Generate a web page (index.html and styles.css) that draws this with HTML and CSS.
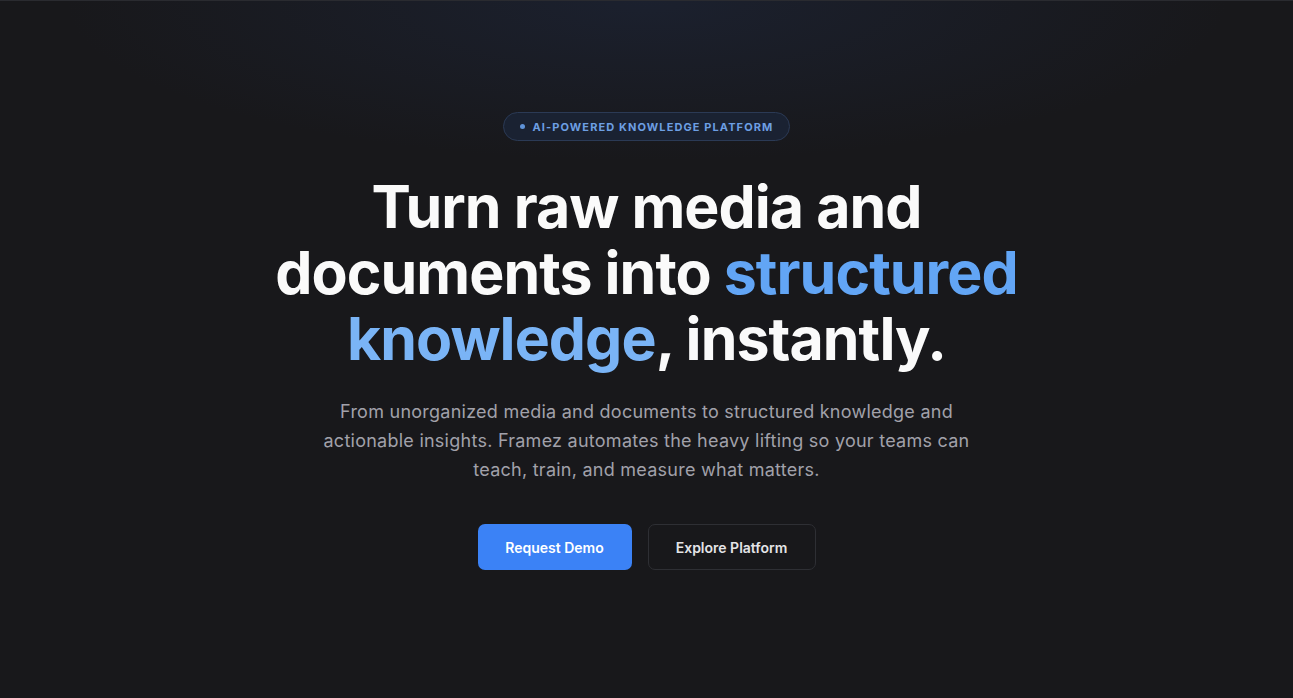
FILE: index.html
```html
<!DOCTYPE html>
<html lang="en">
<head>
<meta charset="utf-8">
<title>Framez</title>
<link rel="stylesheet" href="styles.css">
</head>
<body>
<main class="hero">
  <div class="glow"></div>
  <div class="content">
    <div class="badge"><span class="dot"></span>AI-POWERED KNOWLEDGE PLATFORM</div>
    <h1 class="title">Turn raw media and<br>documents into <span class="accent a1">structured</span><br><span class="accent a2">knowledge</span>, instantly.</h1>
    <p class="lead">From unorganized media and documents to structured knowledge and<br>actionable insights. Framez automates the heavy lifting so your teams can<br>teach, train, and measure what matters.</p>
    <div class="actions">
      <a class="btn btn-primary" href="#">Request Demo</a>
      <a class="btn btn-ghost" href="#">Explore Platform</a>
    </div>
  </div>
</main>
</body>
</html>
```
FILE: styles.css
```css
* { box-sizing: border-box; }
html, body { margin: 0; height: 100%; }
body {
  background: #18181b;
  font-family: Inter, "Noto Sans", sans-serif;
  color: #fff;
}
.hero {
  position: relative;
  height: 698px;
  overflow: hidden;
  border-top: 1px solid #2a2b30;
}
.glow {
  position: absolute;
  left: 0; right: 0; top: 0;
  height: 160px;
  background: radial-gradient(ellipse 45% 100% at 50% 0%, rgba(32, 45, 75, 0.4), rgba(24, 24, 27, 0) 100%);
  pointer-events: none;
}
.content {
  position: relative;
  display: flex;
  flex-direction: column;
  align-items: center;
  padding-top: 111px;
  text-align: center;
}
.badge {
  display: flex;
  align-items: center;
  gap: 8px;
  height: 29px;
  padding: 0 16px 0 16px;
  border: 1px solid #2b3a55;
  background: #1a2232;
  border-radius: 999px;
  color: #6d9fe3;
  font-size: 11px;
  font-weight: 700;
  letter-spacing: 0.1em;
}
.dot {
  width: 5px; height: 5px;
  border-radius: 50%;
  background: #5f93d8;
}
.title {
  margin: 33px 0 0;
  font-size: 59px;
  line-height: 66px;
  font-weight: 700;
  letter-spacing: -0.016em;
  color: #fafafa;
}
.accent.a1 { color: #62a5f5; }
.accent.a2 { color: #7ab4f6; }
.lead {
  margin: 25px 0 0;
  font-size: 18px;
  line-height: 29px;
  letter-spacing: 0.25px;
  color: #a1a1aa;
}
.actions {
  display: flex;
  gap: 16px;
  margin-top: 40px;
}
.btn {
  display: flex;
  align-items: center;
  justify-content: center;
  height: 46px;
  border-radius: 7px;
  font-size: 14px;
  font-weight: 600;
  text-decoration: none;
}
.btn-primary {
  width: 154px;
  background: #3b82f6;
  color: #fff;
}
.btn-ghost {
  width: 168px;
  border: 1px solid #2e2f34;
  color: #e4e4e7;
  background: #18181b;
}
```
